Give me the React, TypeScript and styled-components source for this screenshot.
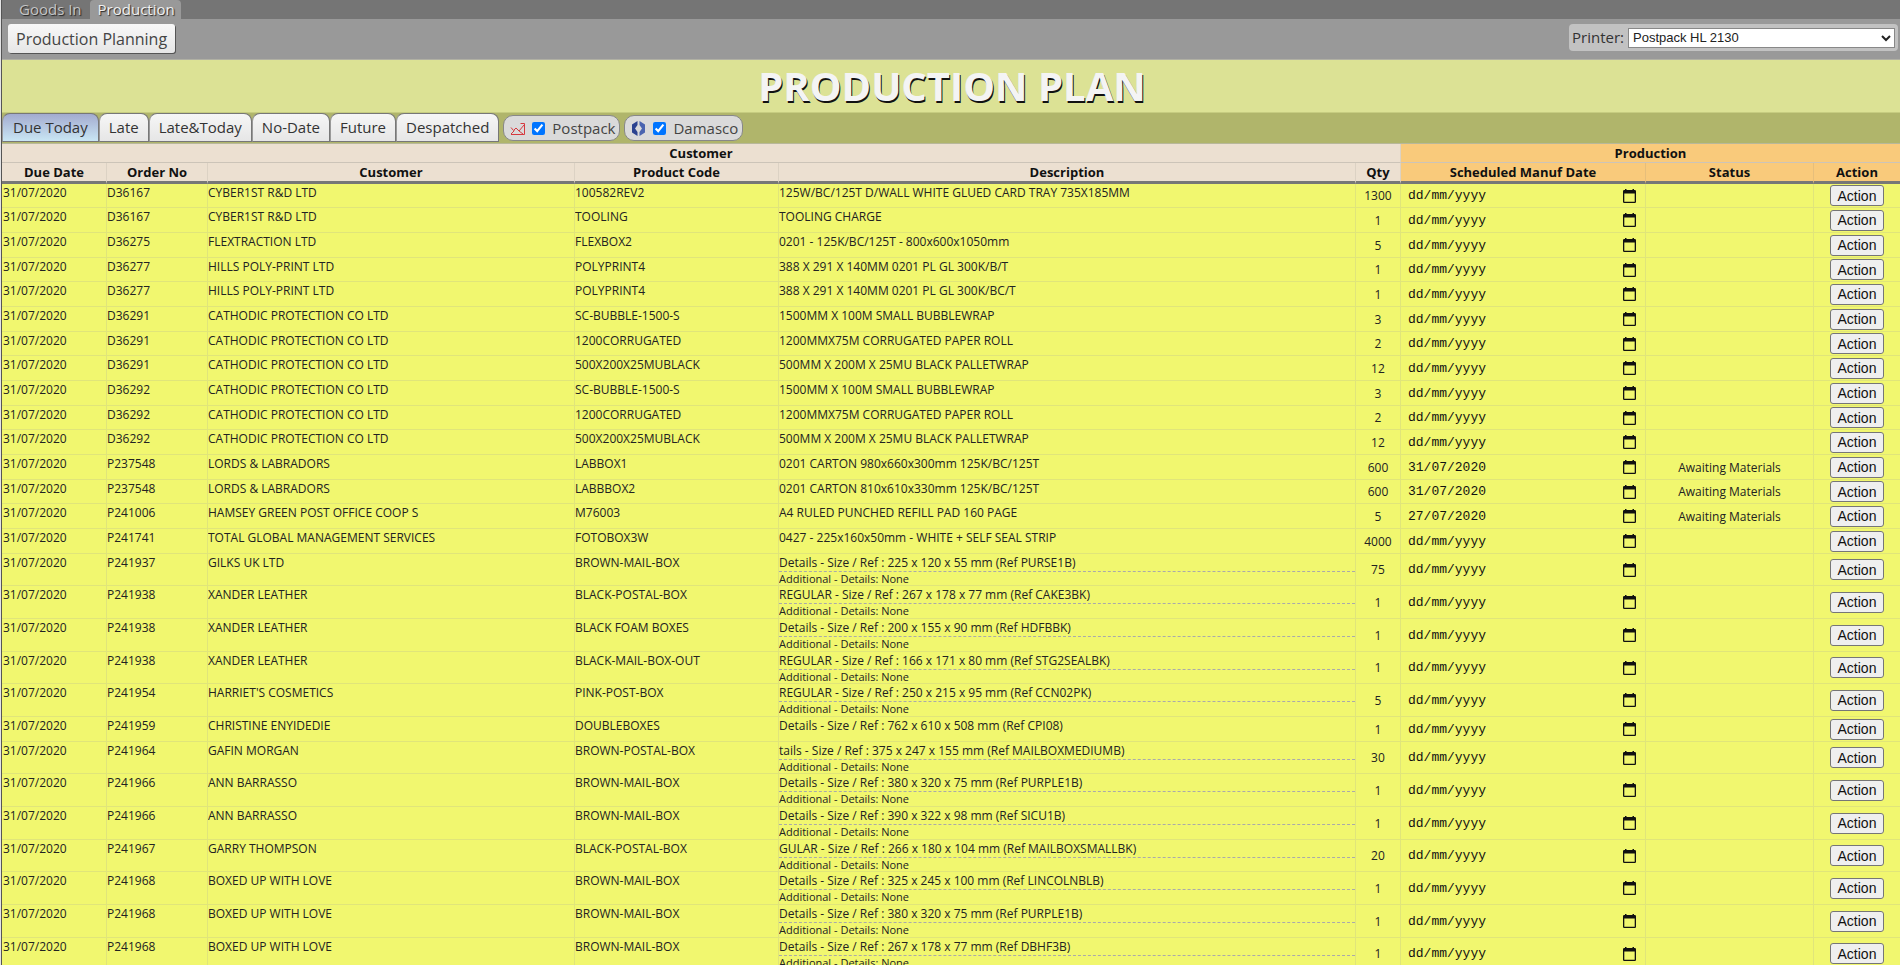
import React from "react";
import styled, { createGlobalStyle, css } from "styled-components";

const GlobalStyle = createGlobalStyle`
  * { box-sizing: border-box; }
  html { scrollbar-width: none; background: #e4e4e4; }
  body {
    margin: 0;
    font-family: "Open Sans", sans-serif;
    font-size: 12px;
    color: #222;
  }
`;

const Page = styled.div`
  margin-left: 1px;
  border-left: 1px solid #555;
  background: #f1f76f;
`;

const MenuBar = styled.nav`
  display: flex;
  height: 19px;
  padding-left: 9px;
  background: #757575;
`;

const MenuLink = styled.a<{ $active?: boolean }>`
  padding: 0 6px 0 8px;
  font-size: 15px;
  line-height: 19px;
  text-decoration: none;
  color: ${(p) => (p.$active ? "#f0f0f0" : "#c4c4c4")};
  text-shadow: 1px 1px 1px #222;
  border-radius: 4px 4px 0 0;
  background: ${(p) => (p.$active ? "#999" : "transparent")};
  & + & { margin-left: 2px; }
`;

const Toolbar = styled.div`
  display: flex;
  justify-content: space-between;
  align-items: flex-start;
  height: 41px;
  padding: 5px 2px 0 6px;
  background: #999;
  border-bottom: 1px solid #b0b0a4;
`;

const PlanningButton = styled.button`
  height: 29px;
  padding: 0 8px;
  border: 0;
  border-radius: 3px;
  background: linear-gradient(#f8f8f8, #e6e6e6);
  box-shadow: 1px 1px 0 #555;
  font: 16px/26px "Open Sans", sans-serif;
  color: #444;
`;

const PrinterBox = styled.label`
  display: flex;
  align-items: center;
  gap: 4px;
  height: 27px;
  padding: 0 3px 2px 3px;
  border-radius: 4px;
  background: #c2c2c2;
  font-size: 15px;
  line-height: 20px;
  color: #333;
`;

const PrinterSelect = styled.select`
  width: 267px;
  height: 20px;
  margin-top: 2px;
  padding: 0;
  border: 1px solid #888;
  background: #fff;
  font: 13px "Liberation Sans", sans-serif;
  color: #222;
`;

const Title = styled.h1`
  height: 53px;
  margin: 0;
  padding-left: 2px;
  background: #dce295;
  border-bottom: 1px solid #c6cc80;
  text-align: center;
  font-size: 40px;
  line-height: 52px;
  color: #f4f4f4;
  text-shadow: 1px 2px 0 #111;
`;

const FilterBar = styled.div`
  display: flex;
  height: 31px;
  background: #b0b56b;
  border-bottom: 1px solid #b8b89a;
`;

const FilterTab = styled.button<{ $active?: boolean }>`
  height: 29px;
  padding: 0 ${(p) => (p.$active ? 10 : 9)}px;
  border: 1px solid #777;
  border-left-color: #999;
  border-radius: 8px 8px 0 0;
  background: ${(p) =>
    p.$active
      ? "linear-gradient(#a3abcf, #c9e6f4)"
      : "linear-gradient(#f6f6f6, #e6e6e6)"};
  font: 15px/27px "Open Sans", sans-serif;
  color: #333;
`;

const Source = styled.label`
  display: flex;
  align-items: center;
  gap: 7px;
  height: 26px;
  margin: 2px 0 0 4px;
  padding: 0 4px 0 6px;
  border: 1px solid #888;
  border-radius: 10px;
  background: #dadada;
  font-size: 15px;
  color: #444;
  input { width: 13px; height: 13px; margin: 0; }
`;

const Grid = styled.table`
  width: 100%;
  table-layout: fixed;
  border-collapse: separate;
  border-spacing: 0;
`;

const Column = styled.col<{ $width?: number }>`
  ${(p) => p.$width && css`width: ${p.$width}px;`}
`;

const Heading = styled.th<{ $production?: boolean; $group?: boolean }>`
  height: ${(p) => (p.$group ? 19 : 21)}px;
  padding: 0;
  font-size: 13px;
  line-height: 18px;
  color: #111;
  background: ${(p) => (p.$production ? "#f9ca7b" : "#ece0d1")};
  border-right: 1px solid ${(p) => (p.$production ? "#e6be7b" : "#dcd2c4")};
  border-bottom: ${(p) => (p.$group ? "1px solid #ccc4b8" : "3px solid #777")};
  &:last-child { border-right: 0; }
`;

const Row = styled.tr<{ $tall: boolean }>`
  height: ${(p) => (p.$tall ? 33 : 25)}px;
  &:nth-child(3n + 1) { height: ${(p) => (p.$tall ? 32 : 24)}px; }
`;

const Cell = styled.td<{ $center?: boolean }>`
  padding: 0;
  vertical-align: ${(p) => (p.$center ? "middle" : "top")};
  text-align: ${(p) => (p.$center ? "center" : "left")};
  line-height: 17px;
  white-space: nowrap;
  overflow: hidden;
  border-right: 1px solid #e0e57a;
  border-bottom: 1px solid #e0e57a;
  &:first-child { padding-left: 1px; }
  &:last-child { border-right: 0; }
`;

const Extra = styled.div`
  border-top: 1px dashed #aaa;
  font-size: 11px;
  line-height: 13px;
`;

const DateField = styled.div`
  display: flex;
  align-items: center;
  justify-content: space-between;
  height: 20px;
  padding: 0 9px 0 7px;
`;

const DateInput = styled.input`
  width: 90px;
  height: 18px;
  padding: 0;
  border: 0;
  background: transparent;
  font: 13px "Liberation Mono", monospace;
  color: #111;
  &::placeholder { color: #111; opacity: 1; }
`;

const PickerButton = styled.button`
  display: flex;
  padding: 0;
  border: 0;
  background: transparent;
`;

const ActionButton = styled.button`
  display: block;
  width: 54px;
  height: 21px;
  margin: 0 auto;
  padding: 0;
  border: 1px solid #767676;
  border-radius: 3px;
  background: #efefef;
  font: 14px/18px "Liberation Sans", sans-serif;
  color: #111;
`;

const CalendarIcon = () => (
  <svg width="13" height="14" viewBox="0 0 13 14" aria-hidden="true">
    <path d="M2 0h1.500v1h6V0H11v1h.8A1.200 1.200 0 0 1 13 2.200v10.600A1.200 1.200 0 0 1 11.800 14H1.200A1.200 1.200 0 0 1 0 12.800V2.200A1.200 1.200 0 0 1 1.200 1H2zM1.300 4.600v8.100h10.400V4.600z" fill="#111" fillRule="evenodd" />
  </svg>
);

const PostpackIcon = () => (
  <svg width="15" height="13" viewBox="0 0 15 13" fill="none" stroke="#d5393e" aria-hidden="true">
    <path d="M1 12.500h13.500V1.500M10.500 1.500h4M1 5.500l2.500 3L6 6l3 3 5-6M1 12l3.500-3.500M9 9l4 3" />
  </svg>
);

const DamascoIcon = () => (
  <svg width="15" height="15" viewBox="0 0 15 15" aria-hidden="true">
    <path d="M6.500 0v4L4 7.500 6.500 11v4L1 11.500v-8z" fill="#2c4390" />
    <path d="M8.500 0v4L11 7.500 8.500 11v4L14 11.500v-8z" fill="#4a64b0" />
  </svg>
);

interface Order {
  no: string;
  customer: string;
  code: string;
  text: string;
  qty: number;
  extra?: boolean;
  date?: string;
  status?: string;
}

const order = (no: string, customer: string, code: string, text: string, qty: number, more: Partial<Order> = {}): Order => ({
  no, customer, code, text, qty, ...more,
});

const CATHODIC = "CATHODIC PROTECTION CO LTD";
const extra = { extra: true };
const waiting = (date: string) => ({ date, status: "Awaiting Materials" });

const orders: Order[] = [
  order("D36167", "CYBER1ST R&D LTD", "100582REV2", "125W/BC/125T D/WALL WHITE GLUED CARD TRAY 735X185MM", 1300),
  order("D36167", "CYBER1ST R&D LTD", "TOOLING", "TOOLING CHARGE", 1),
  order("D36275", "FLEXTRACTION LTD", "FLEXBOX2", "0201 - 125K/BC/125T - 800x600x1050mm", 5),
  order("D36277", "HILLS POLY-PRINT LTD", "POLYPRINT4", "388 X 291 X 140MM 0201 PL GL 300K/B/T", 1),
  order("D36277", "HILLS POLY-PRINT LTD", "POLYPRINT4", "388 X 291 X 140MM 0201 PL GL 300K/BC/T", 1),
  order("D36291", CATHODIC, "SC-BUBBLE-1500-S", "1500MM X 100M SMALL BUBBLEWRAP", 3),
  order("D36291", CATHODIC, "1200CORRUGATED", "1200MMX75M CORRUGATED PAPER ROLL", 2),
  order("D36291", CATHODIC, "500X200X25MUBLACK", "500MM X 200M X 25MU BLACK PALLETWRAP", 12),
  order("D36292", CATHODIC, "SC-BUBBLE-1500-S", "1500MM X 100M SMALL BUBBLEWRAP", 3),
  order("D36292", CATHODIC, "1200CORRUGATED", "1200MMX75M CORRUGATED PAPER ROLL", 2),
  order("D36292", CATHODIC, "500X200X25MUBLACK", "500MM X 200M X 25MU BLACK PALLETWRAP", 12),
  order("P237548", "LORDS & LABRADORS", "LABBOX1", "0201 CARTON 980x660x300mm 125K/BC/125T", 600, waiting("31/07/2020")),
  order("P237548", "LORDS & LABRADORS", "LABBBOX2", "0201 CARTON 810x610x330mm 125K/BC/125T", 600, waiting("31/07/2020")),
  order("P241006", "HAMSEY GREEN POST OFFICE COOP S", "M76003", "A4 RULED PUNCHED REFILL PAD 160 PAGE", 5, waiting("27/07/2020")),
  order("P241741", "TOTAL GLOBAL MANAGEMENT SERVICES", "FOTOBOX3W", "0427 - 225x160x50mm - WHITE + SELF SEAL STRIP", 4000),
  order("P241937", "GILKS UK LTD", "BROWN-MAIL-BOX", "Details - Size / Ref : 225 x 120 x 55 mm (Ref PURSE1B)", 75, extra),
  order("P241938", "XANDER LEATHER", "BLACK-POSTAL-BOX", "REGULAR - Size / Ref : 267 x 178 x 77 mm (Ref CAKE3BK)", 1, extra),
  order("P241938", "XANDER LEATHER", "BLACK FOAM BOXES", "Details - Size / Ref : 200 x 155 x 90 mm (Ref HDFBBK)", 1, extra),
  order("P241938", "XANDER LEATHER", "BLACK-MAIL-BOX-OUT", "REGULAR - Size / Ref : 166 x 171 x 80 mm (Ref STG2SEALBK)", 1, extra),
  order("P241954", "HARRIET'S COSMETICS", "PINK-POST-BOX", "REGULAR - Size / Ref : 250 x 215 x 95 mm (Ref CCN02PK)", 5, extra),
  order("P241959", "CHRISTINE ENYIDEDIE", "DOUBLEBOXES", "Details - Size / Ref : 762 x 610 x 508 mm (Ref CPI08)", 1),
  order("P241964", "GAFIN MORGAN", "BROWN-POSTAL-BOX", "tails - Size / Ref : 375 x 247 x 155 mm (Ref MAILBOXMEDIUMB)", 30, extra),
  order("P241966", "ANN BARRASSO", "BROWN-MAIL-BOX", "Details - Size / Ref : 380 x 320 x 75 mm (Ref PURPLE1B)", 1, extra),
  order("P241966", "ANN BARRASSO", "BROWN-MAIL-BOX", "Details - Size / Ref : 390 x 322 x 98 mm (Ref SICU1B)", 1, extra),
  order("P241967", "GARRY THOMPSON", "BLACK-POSTAL-BOX", "GULAR - Size / Ref : 266 x 180 x 104 mm (Ref MAILBOXSMALLBK)", 20, extra),
  order("P241968", "BOXED UP WITH LOVE", "BROWN-MAIL-BOX", "Details - Size / Ref : 325 x 245 x 100 mm (Ref LINCOLNBLB)", 1, extra),
  order("P241968", "BOXED UP WITH LOVE", "BROWN-MAIL-BOX", "Details - Size / Ref : 380 x 320 x 75 mm (Ref PURPLE1B)", 1, extra),
  order("P241968", "BOXED UP WITH LOVE", "BROWN-MAIL-BOX", "Details - Size / Ref : 267 x 178 x 77 mm (Ref DBHF3B)", 1, extra),
];

const filters = ["Due Today", "Late", "Late&Today", "No-Date", "Future", "Despatched"];
const widths = [105, 101, 367, 204, undefined, 45, 245, 168, 86];
const customerHeadings = ["Due Date", "Order No", "Customer", "Product Code", "Description", "Qty"];
const productionHeadings = ["Scheduled Manuf Date", "Status", "Action"];

export default function App() {
  return (
    <Page>
      <GlobalStyle />
      <MenuBar>
        <MenuLink href="#goods-in">Goods In</MenuLink>
        <MenuLink href="#production" $active>Production</MenuLink>
      </MenuBar>
      <Toolbar>
        <PlanningButton>Production Planning</PlanningButton>
        <PrinterBox>
          Printer:
          <PrinterSelect>
            <option>Postpack HL 2130</option>
          </PrinterSelect>
        </PrinterBox>
      </Toolbar>
      <Title>PRODUCTION PLAN</Title>
      <FilterBar>
        {filters.map((name, i) => (
          <FilterTab key={name} $active={i === 0}>{name}</FilterTab>
        ))}
        <Source>
          <PostpackIcon />
          <input type="checkbox" defaultChecked />
          Postpack
        </Source>
        <Source>
          <DamascoIcon />
          <input type="checkbox" defaultChecked />
          Damasco
        </Source>
      </FilterBar>
      <Grid>
        <colgroup>
          {widths.map((w, i) => <Column key={i} $width={w} />)}
        </colgroup>
        <thead>
          <tr>
            <Heading $group colSpan={6}>Customer</Heading>
            <Heading $group $production colSpan={3}>Production</Heading>
          </tr>
          <tr>
            {customerHeadings.map((h) => <Heading key={h}>{h}</Heading>)}
            {productionHeadings.map((h) => <Heading key={h} $production>{h}</Heading>)}
          </tr>
        </thead>
        <tbody>
          {orders.map((o, i) => (
            <Row key={i} $tall={!!o.extra}>
              <Cell>31/07/2020</Cell>
              <Cell>{o.no}</Cell>
              <Cell>{o.customer}</Cell>
              <Cell>{o.code}</Cell>
              <Cell>
                {o.text}
                {o.extra && <Extra>Additional - Details: None</Extra>}
              </Cell>
              <Cell $center>{o.qty}</Cell>
              <Cell $center>
                <DateField>
                  <DateInput aria-label="Scheduled manufacture date" placeholder="dd/mm/yyyy" defaultValue={o.date} />
                  <PickerButton aria-label="Pick a date"><CalendarIcon /></PickerButton>
                </DateField>
              </Cell>
              <Cell $center>{o.status}</Cell>
              <Cell $center><ActionButton>Action</ActionButton></Cell>
            </Row>
          ))}
        </tbody>
      </Grid>
    </Page>
  );
}
